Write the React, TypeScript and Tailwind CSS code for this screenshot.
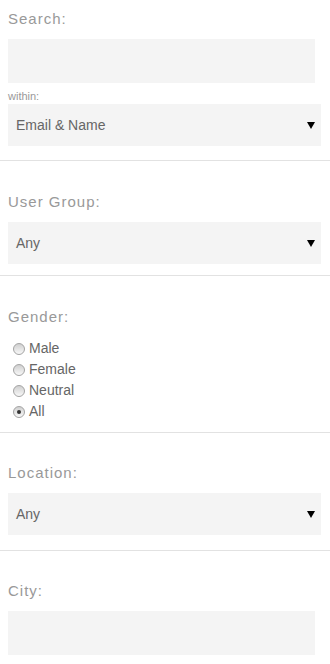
import React, { useState } from 'react';

const font = { fontFamily: '"Liberation Sans", Arial, sans-serif' };

const Label: React.FC<{ text: string }> = ({ text }) => (
  <div className="text-[15px] leading-[20px] tracking-[1px] text-[#999]">{text}</div>
);

const SelectBox: React.FC<{ value: string }> = ({ value }) => (
  <div className="mt-[10px] mr-[9px] ml-[8px] h-[42px] bg-[#f4f4f4] flex items-center justify-between pl-[8px] pr-[6px]">
    <span className="text-[14px] text-[#666]">{value}</span>
    <svg width="8" height="7" viewBox="0 0 8 7">
      <path d="M0 0H8L4 7Z" fill="#000" />
    </svg>
  </div>
);

const Radio: React.FC<{ label: string; checked: boolean; onClick: () => void }> = ({ label, checked, onClick }) => (
  <div className="flex items-center h-[21px] pl-[13px] cursor-pointer" onClick={onClick}>
    <span className="w-[12px] h-[12px] rounded-full border border-[#a3a3a3] bg-gradient-to-b from-[#d0d0d0] to-[#f8f8f8] flex items-center justify-center">
      {checked && <span className="w-[4px] h-[4px] rounded-full bg-[#333]" />}
    </span>
    <span className="ml-[4px] text-[14px] text-[#666]">{label}</span>
  </div>
);

const Divider = () => <div className="h-px bg-[#e2e2e2]" />;

const App: React.FC = () => {
  const [gender, setGender] = useState('All');

  return (
    <div className="w-[330px] min-h-screen bg-white" style={font}>
      {/* Search */}
      <div className="pt-[9px] pb-[14px]">
        <div className="pl-[8px]"><Label text="Search:" /></div>
        <div className="mt-[10px] ml-[8px] w-[307px] h-[44px] bg-[#f4f4f4]" />
        <div className="mt-[6px] pl-[8px] text-[11px] leading-[14px] text-[#999]">within:</div>
        <div className="-mt-[9px]"><SelectBox value="Email & Name" /></div>
      </div>
      <Divider />

      {/* User group */}
      <div className="pt-[31px] pb-[11px]">
        <div className="pl-[8px]"><Label text="User Group:" /></div>
        <SelectBox value="Any" />
      </div>
      <Divider />

      {/* Gender */}
      <div className="pt-[31px] pb-[10px]">
        <div className="pl-[8px]"><Label text="Gender:" /></div>
        <div className="mt-[11px]">
          {['Male', 'Female', 'Neutral', 'All'].map((g) => (
            <Radio key={g} label={g} checked={gender === g} onClick={() => setGender(g)} />
          ))}
        </div>
      </div>
      <Divider />

      {/* Location */}
      <div className="pt-[30px] pb-[15px]">
        <div className="pl-[8px]"><Label text="Location:" /></div>
        <SelectBox value="Any" />
      </div>
      <Divider />

      {/* City */}
      <div className="pt-[30px]">
        <div className="pl-[8px]"><Label text="City:" /></div>
        <div className="mt-[10px] ml-[8px] w-[307px] h-[44px] bg-[#f4f4f4]" />
      </div>
    </div>
  );
};

export default App;
